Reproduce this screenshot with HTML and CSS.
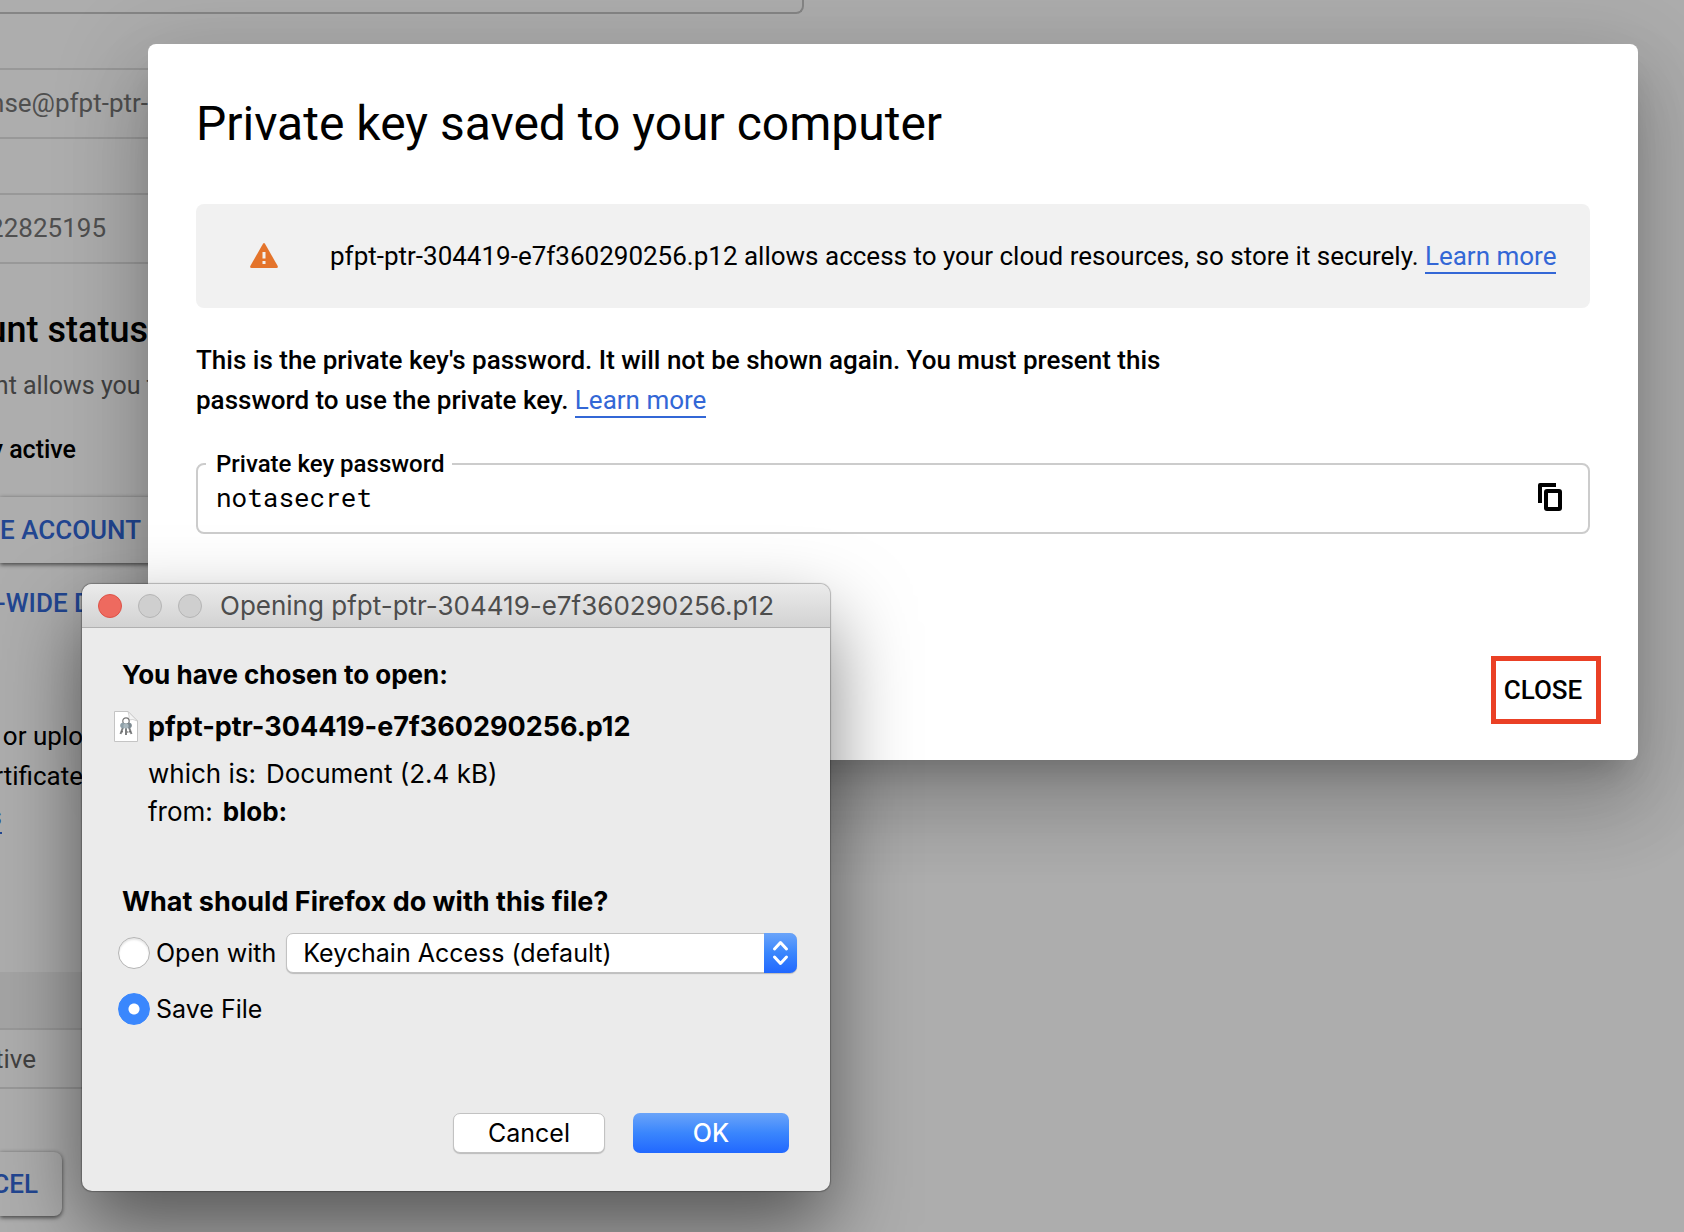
FILE: index.html
```html
<!DOCTYPE html>
<html lang="en">
<head>
<meta charset="utf-8">
<title>Private key saved to your computer</title>
<link rel="stylesheet" href="styles.css">
</head>
<body>
<main class="page">
  <div class="field field-top"></div>
  <div class="field field-locked"><span class="clip clip-wide">nse@pfpt-ptr-</span></div>
  <div class="field field-locked"><span class="clip clip-id">22825195</span></div>
  <h2 class="clip clip-wide status-title">unt status</h2>
  <p class="clip clip-note status-note">unt allows you t</p>
  <p class="clip clip-state state">y active</p>
  <button class="raised raised-account" type="button"><span class="clip clip-button">E ACCOUNT</span></button>
  <a class="clip clip-link section-link" href="#">-WIDE D</a>
  <p class="clip clip-narrow help">or uplo</p>
  <p class="clip clip-narrow help">rtificate</p>
  <a class="help-link" href="#">s</a>
  <table class="keys">
    <thead><tr><th></th></tr></thead>
    <tbody><tr><td><span class="clip clip-cell">tive</span></td></tr></tbody>
  </table>
  <button class="raised raised-cancel" type="button"><span class="clip clip-cell">CEL</span></button>
</main>
<div class="scrim"></div>

<section class="modal" role="dialog" aria-labelledby="modal-title">
  <h1 id="modal-title" class="modal-title">Private key saved to your computer</h1>
  <div class="notice">
    <svg class="notice-icon" viewBox="0 0 28 26" aria-hidden="true">
      <path fill="#e4742b" d="M13 .8q1-1.400 2 0L27.700 23q.6 2-1.200 2h-25q-1.800 0-1.200-2z"/>
      <path fill="#f1f1f1" d="M12.500 9h3v6.500h-3zM12.500 18h3v3h-3z"/>
    </svg>
    <p class="notice-text">pfpt-ptr-304419-e7f360290256.p12 allows access to your cloud resources, so store it securely. <a class="link" href="#">Learn more</a></p>
  </div>
  <p class="explain">This is the private key's password. It will not be shown again. You must present this password to use the private key. <a class="link" href="#">Learn more</a></p>
  <fieldset class="secret">
    <legend><label for="secret">Private key password</label></legend>
    <input id="secret" class="secret-input" type="text" value="notasecret" readonly>
    <button class="copy" type="button" aria-label="Copy">
      <svg viewBox="0 0 24 28" width="24" height="28" aria-hidden="true">
        <path fill="none" stroke="#000" stroke-width="4" stroke-linejoin="round" d="M2 20V2h16"/>
        <rect x="8" y="8" width="14" height="18" rx="1" fill="none" stroke="#000" stroke-width="4"/>
      </svg>
    </button>
  </fieldset>
  <div class="modal-actions"><button class="close" type="button">CLOSE</button></div>
</section>

<form class="window" role="dialog" aria-labelledby="window-title">
  <header class="titlebar">
    <button class="light light-close" type="button" aria-label="Close window"></button>
    <button class="light" type="button" aria-label="Minimize" disabled></button>
    <button class="light" type="button" aria-label="Zoom" disabled></button>
    <h2 id="window-title" class="window-title">Opening pfpt-ptr-304419-e7f360290256.p12</h2>
  </header>
  <div class="window-body">
    <h3 class="prompt">You have chosen to open:</h3>
    <div class="file">
      <svg class="file-icon" viewBox="0 0 24 32" aria-hidden="true">
        <path fill="#fff" stroke="#c4c4c4" d="M.5.500h13.500l9.500 9.500v20.500H.5z"/>
        <path fill="#f4f4f4" stroke="#c8c8c8" stroke-width=".8" d="M14 .5q2 5 .5 8.500 4-1.500 9 1z"/>
        <circle cx="12" cy="10" r="3.200" fill="none" stroke="#777" stroke-width="1.200"/>
        <path fill="none" stroke="#7d7f80" stroke-width="2" d="M9.500 15 6.500 23M14.500 15l3 8M12 15v9"/>
        <path fill="none" stroke="#555" stroke-width="1" d="M7.500 20.500l1.500.5M15 21l1.500-.5M13 21h1.500"/>
        <circle cx="9" cy="14.500" r="2.800" fill="#8fa0a8"/>
        <circle cx="15" cy="14.500" r="2.800" fill="#7c8990"/>
        <circle cx="12" cy="15" r="2.600" fill="#a9b7bd"/>
      </svg>
      <strong class="file-name">pfpt-ptr-304419-e7f360290256.p12</strong>
    </div>
    <p class="detail"><span>which is:</span><span>Document (2.4 kB)</span></p>
    <p class="detail"><span>from:</span><strong>blob:</strong></p>
    <h3 class="prompt prompt-action">What should Firefox do with this file?</h3>
    <div class="option">
      <input class="radio" type="radio" name="action" id="open">
      <label for="open">Open with</label>
      <span class="picker">
        <select class="picker-select" aria-label="Application"><option>Keychain Access (default)</option></select>
        <svg class="picker-arrows" viewBox="0 0 33 40" aria-hidden="true"><path fill="none" stroke="#fff" stroke-width="3" stroke-linecap="round" stroke-linejoin="round" d="m10.500 16 6-6.500 6 6.500m-12 8 6 6.500 6-6.500"/></svg>
      </span>
    </div>
    <div class="option">
      <input class="radio" type="radio" name="action" id="save" checked>
      <label for="save">Save File</label>
    </div>
    <div class="window-actions">
      <button class="push push-cancel" type="button">Cancel</button>
      <button class="push push-ok" type="button">OK</button>
    </div>
  </div>
</form>
</body>
</html>
```
FILE: styles.css
```css
* { box-sizing: border-box; }
body {
  margin: 0;
  min-height: 100vh;
  overflow: hidden;
  position: relative;
  background: #fff;
  color: #000;
  font-family: Roboto, "Liberation Sans", sans-serif;
  font-size: 26px;
}
h1, h2, h3, p { margin: 0; }
button, input, select { font: inherit; color: inherit; margin: 0; }

/* Page behind the dialogs, scrolled past its left edge */
.page { display: flex; flex-direction: column; align-items: flex-start; }
.clip { display: flex; justify-content: flex-end; white-space: nowrap; }
.clip-wide { width: 148px; }
.clip-note { width: 155px; }
.clip-button { width: 141px; }
.clip-id { width: 106px; }
.clip-link { width: 91px; }
.clip-narrow { width: 83px; }
.clip-state { width: 76px; }
.clip-cell { width: 36px; }
.field {
  width: 780px;
  height: 71px;
  margin-top: 54px;
  border: 2px solid #e0e0e0;
  border-left: 0;
  border-radius: 0 8px 8px 0;
  color: #757575;
  line-height: 67px;
}
.field-top { width: 804px; height: 14px; margin-top: 0; border-top: 0; border-color: #c4c4c4; border-radius: 0 0 8px 0; }
.status-title { margin-top: 42px; font-size: 36px; font-weight: 500; line-height: 48px; }
.status-note { margin-top: 12px; color: #616161; line-height: 40px; font-size: 25px; }
.state { margin-top: 24px; font-size: 25px; font-weight: 500; line-height: 40px; }
.raised {
  display: flex;
  align-items: center;
  height: 66px;
  padding: 0;
  border: 0;
  border-radius: 0 8px 8px 0;
  background: #fff;
  box-shadow: 0 2px 4px rgba(0,0,0,.5), 0 0 4px rgba(0,0,0,.2);
  color: #3367d6;
  font-weight: 500;
}
.raised-account { width: 170px; margin-top: 27px; }
.raised-cancel { width: 62px; height: 64px; margin-top: 63px; }
.raised-cancel .clip { width: 38px; }
.section-link { margin-top: 20px; color: #3367d6; font-weight: 500; line-height: 40px; text-decoration: none; }
.help { line-height: 40px; }
.section-link + .help { margin-top: 93px; }
.help-link { width: 2px; display: flex; justify-content: flex-end; border-bottom: 2px solid #3367d6; color: #3367d6; line-height: 32px; margin-top: 4px; text-decoration: none; }
.keys { width: 780px; margin-top: 138px; border-collapse: separate; border-spacing: 0; color: #616161; }
.keys th { height: 58px; padding: 0; background: #f2f2f2; border-bottom: 2px solid #e0e0e0; }
.keys td { height: 59px; padding: 0; border-bottom: 2px solid #e0e0e0; }
.scrim { position: absolute; inset: 0; background: rgba(0,0,0,.32); }

/* Private key dialog */
.modal {
  position: absolute;
  top: 44px;
  left: 148px;
  right: 46px;
  padding: 48px 48px 36px;
  border-radius: 8px;
  background: #fff;
  box-shadow: 0 22px 30px -14px rgba(0,0,0,.2), 0 48px 76px 6px rgba(0,0,0,.14), 0 18px 92px 16px rgba(0,0,0,.12);
}
.modal-title { font-size: 48px; font-weight: 400; line-height: 64px; }
.notice {
  display: flex;
  align-items: center;
  gap: 52px;
  height: 104px;
  margin-top: 48px;
  padding: 0 32px 0 54px;
  border-radius: 8px;
  background: #f1f1f1;
}
.notice-icon { width: 28px; height: 26px; flex: none; }
.notice-text { line-height: 40px; white-space: nowrap; }
.link { padding-bottom: 1px; border-bottom: 2px solid #3367d6; color: #3367d6; font-weight: 400; text-decoration: none; }
.explain { max-width: 1000px; margin-top: 32px; font-weight: 500; line-height: 40px; }
.secret {
  display: flex;
  align-items: center;
  justify-content: space-between;
  min-width: 0;
  height: 86px;
  margin: 28px 0 0;
  padding: 0 26px 18px 8px;
  border: 2px solid #ccc;
  border-radius: 8px;
}
.secret legend { padding: 0 8px 0 10px; font-size: 24px; font-weight: 500; line-height: 32px; }
.secret-input { flex: 1; min-width: 0; padding: 0 10px; border: 0; background: none; outline: 0; font-family: "Roboto Mono", "DejaVu Sans Mono", monospace; font-size: 26px; }
.copy { display: flex; padding: 0; border: 0; background: none; }
.modal-actions { display: flex; justify-content: flex-end; margin: 122px -11px 0 0; }
.close { width: 110px; height: 68px; padding: 0 6px 0 0; border: 5px solid #ea4025; background: none; font-weight: 500; }

/* Native download window */
.window {
  position: absolute;
  top: 584px;
  left: 82px;
  width: 748px;
  border-radius: 10px;
  background: #ebebeb;
  box-shadow: 0 0 1px 1px rgba(0,0,0,.25), 0 36px 80px rgba(0,0,0,.5);
  font-family: Inter, "Liberation Sans", sans-serif;
}
.titlebar {
  display: flex;
  align-items: center;
  gap: 16px;
  height: 44px;
  padding: 0 16px;
  border-bottom: 1px solid #b0b0b0;
  border-radius: 10px 10px 0 0;
  background: linear-gradient(#ebebeb, #d2d2d2);
}
.light { width: 24px; height: 24px; padding: 0; border: 1px solid #b5b5b5; border-radius: 50%; background: #cfcfcf; }
.light-close { border-color: #dd5247; background: #ee6a5f; }
.window-title { margin-left: 2px; color: #4d4d4d; font-size: 26px; font-weight: 400; white-space: nowrap; }
.window-body { padding: 30px 33px 38px 32px; font-size: 25px; }
.prompt { padding-left: 8px; font-size: 26px; font-weight: 700; line-height: 34px; }
.prompt-action { margin-top: 54px; font-size: 27px; }
.file { display: flex; align-items: center; gap: 10px; margin-top: 17px; }
.file-icon { width: 24px; height: 32px; }
.file-name { font-size: 27px; line-height: 36px; }
.detail { display: flex; gap: 10px; padding-left: 34px; font-size: 26px; line-height: 38px; }
.file + .detail { margin-top: 10px; }
.option { display: flex; align-items: center; gap: 6px; height: 40px; margin-top: 16px; padding-left: 4px; }
.prompt-action + .option { margin-top: 14px; }
.radio { appearance: none; width: 32px; height: 32px; border: 1px solid #b4b4b4; border-radius: 50%; background: #fff; box-shadow: inset 0 2px 2px rgba(0,0,0,.1); }
.radio:checked { border-color: #3a87fd; background: radial-gradient(circle, #fff 5px, #3a87fd 6px); box-shadow: none; }
.picker { position: relative; display: flex; flex: 1; margin-left: 4px; }
.picker-select { appearance: none; width: 100%; height: 40px; padding: 0 16px; border: 1px solid #c2c2c2; border-radius: 7px; background: #fff; box-shadow: 0 1px 1px rgba(0,0,0,.2); }
.picker-arrows { position: absolute; top: 0; right: 0; width: 33px; height: 40px; border-radius: 0 7px 7px 0; background: linear-gradient(#6aa4f9, #3a86fd 50%, #2168ff); pointer-events: none; }
.window-actions { display: flex; justify-content: flex-end; gap: 28px; margin-top: 84px; padding-right: 8px; }
.push { height: 40px; padding: 0; border-radius: 7px; }
.push-cancel { width: 152px; border: 1px solid #c2c2c2; background: #fff; box-shadow: 0 1px 1px rgba(0,0,0,.2); }
.push-ok { width: 156px; border: 0; background: linear-gradient(#6aa4f9, #3a86fd 50%, #2168ff); color: #fff; font-weight: 500; }
```
